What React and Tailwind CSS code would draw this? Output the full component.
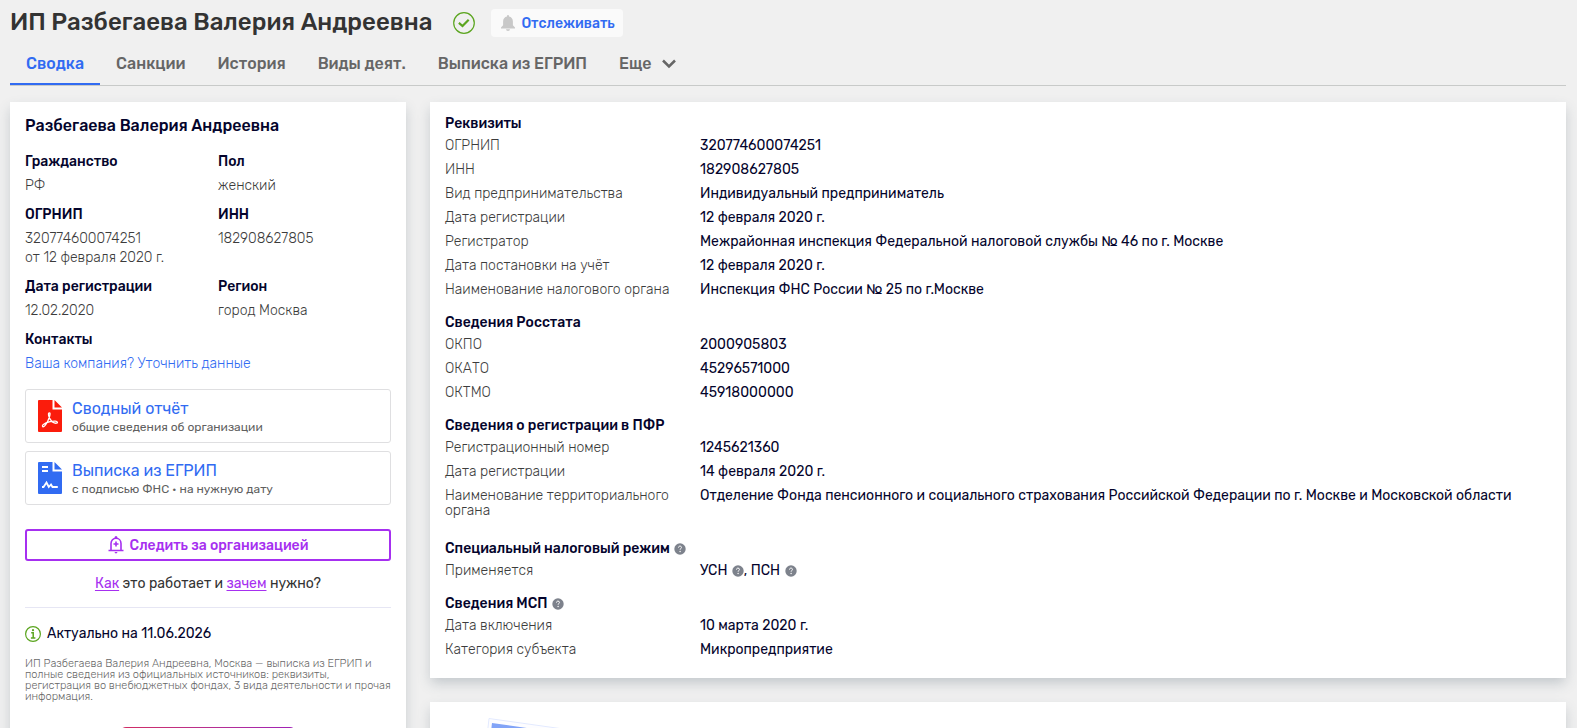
import React from "react";

const tabs = [
  { label: "Сводка", active: true },
  { label: "Санкции" },
  { label: "История" },
  { label: "Виды деят." },
  { label: "Выписка из ЕГРИП" },
];

const profile = [
  { label: "Гражданство", lines: ["РФ"] },
  { label: "Пол", lines: ["женский"] },
  { label: "ОГРНИП", lines: ["320774600074251", "от 12 февраля 2020 г."] },
  { label: "ИНН", lines: ["182908627805"] },
  { label: "Дата регистрации", lines: ["12.02.2020"] },
  { label: "Регион", lines: ["город Москва"] },
];

const HelpIcon = () => (
  <svg viewBox="0 0 12 12" className="ml-px inline-block h-3 w-3 align-[-2px]" aria-hidden="true">
    <circle cx="6" cy="6" r="5.7" fill="#7d828c" />
    <path d="M4.5 4.6c0-1 .7-1.5 1.5-1.5s1.500.5 1.500 1.300c0 1-1.400 1.100-1.400 2.300" fill="none" stroke="#fff" strokeWidth="1" />
    <circle cx="6.100" cy="8.500" r=".7" fill="#fff" />
  </svg>
);

const sections = [
  {
    title: "Реквизиты",
    rows: [
      ["ОГРНИП", "320774600074251"],
      ["ИНН", "182908627805"],
      ["Вид предпринимательства", "Индивидуальный предприниматель"],
      ["Дата регистрации", "12 февраля 2020 г."],
      ["Регистратор", "Межрайонная инспекция Федеральной налоговой службы № 46 по г. Москве"],
      ["Дата постановки на учёт", "12 февраля 2020 г."],
      ["Наименование налогового органа", "Инспекция ФНС России № 25 по г.Москве"],
    ],
  },
  {
    title: "Сведения Росстата",
    rows: [
      ["ОКПО", "2000905803"],
      ["ОКАТО", "45296571000"],
      ["ОКТМО", "45918000000"],
    ],
  },
  {
    title: "Сведения о регистрации в ПФР",
    rows: [
      ["Регистрационный номер", "1245621360"],
      ["Дата регистрации", "14 февраля 2020 г."],
      [
        "Наименование территориального органа",
        "Отделение Фонда пенсионного и социального страхования Российской Федерации по г. Москве и Московской области",
      ],
    ],
    extraSpace: true,
  },
  {
    title: "Специальный налоговый режим",
    help: true,
    rows: [
      [
        "Применяется",
        <>
          УСН <HelpIcon />, ПСН <HelpIcon />
        </>,
      ],
    ],
  },
  {
    title: "Сведения МСП",
    help: true,
    rows: [
      ["Дата включения", "10 марта 2020 г."],
      ["Категория субъекта", "Микропредприятие"],
    ],
  },
];

const CheckBadge = () => (
  <svg viewBox="0 0 22 22" className="h-[22px] w-[22px]" role="img" aria-label="Действует">
    <circle cx="11" cy="11" r="10.3" fill="none" stroke="#5ba51f" strokeWidth="1.2" />
    <path d="M5.900 10.900l3.600 3.100 6.200-6.200" fill="none" stroke="#5ba51f" strokeWidth="2.200" />
  </svg>
);

const BellIcon = () => (
  <svg viewBox="0 0 14 16" className="h-4 w-3.5" fill="#c8c8c8" aria-hidden="true">
    <path d="M7 0a1 1 0 0 0-1 1v.6C3.600 2 2.100 4 2.100 6.400v3.800L0 12.600v.8h14v-.8l-2.100-2.400V6.400C11.900 4 10.400 2 8 1.600V1a1 1 0 0 0-1-1zM5 14.300a2 1.700 0 0 0 4 0z" />
  </svg>
);

const ChevronIcon = () => (
  <svg viewBox="0 0 14 10" className="h-2.5 w-3.5" fill="none" stroke="currentColor" strokeWidth="2.500" aria-hidden="true">
    <path d="M1 1.500l6 6 6-6" />
  </svg>
);

const BellPlusIcon = () => (
  <svg viewBox="0 0 16 18" className="h-[18px] w-4" fill="none" stroke="#a62ff0" strokeWidth="1.600" aria-hidden="true">
    <path d="M3 14V7.500C3 4.500 5.200 2.300 8 2.300s5 2.200 5 5.200V14M.5 14.500h15M8 5.500v5M5.500 8h5" />
    <path d="M7 .2h2l.6 2H6.400zM6.300 16h3.400L8 17.700z" fill="#a62ff0" stroke="none" />
  </svg>
);

const PdfIcon = () => (
  <svg viewBox="0 0 24 32" className="h-8 w-6 shrink-0" aria-hidden="true">
    <path d="M1 0h13.500v9.500H24V31a1 1 0 0 1-1 1H1a1 1 0 0 1-1-1V1a1 1 0 0 1 1-1zM16.500 0L24 7.500h-7.500z" fill="#fb1c0c" />
    <path
      d="M11.400 12.800c-1.700 0-.7 4 .6 6.100 1.500 2.500 4.300 4.500 6.300 4.300 1.800-.2 1.400-2-1-2.100-2.700-.1-6.600.5-9.300 1.700-3 1.400-4.200 3.100-3.200 3.800 1.200.8 3.400-2.400 4.900-5.400 1.600-3.300 3.300-8.400 1.700-8.400z"
      fill="none"
      stroke="#fff"
      strokeWidth="1.300"
    />
  </svg>
);

const StatementIcon = () => (
  <svg viewBox="0 0 24 32" className="h-8 w-6 shrink-0" aria-hidden="true">
    <path d="M1 0h13.500v9.500H24V31a1 1 0 0 1-1 1H1a1 1 0 0 1-1-1V1a1 1 0 0 1 1-1zM16.500 0L24 7.500h-7.500z" fill="#316bf2" />
    <path d="M4 5h6M4 9h6" stroke="#fff" strokeWidth="1.800" />
    <path d="M4 25h1.500l3-4.500 2.300 4.500 2.200-2.500 1.500 2.500h5.300" fill="none" stroke="#fff" strokeWidth="1.800" />
  </svg>
);

const InfoIcon = () => (
  <svg viewBox="0 0 16 16" className="h-4 w-4" fill="none" stroke="#5ba51f" aria-hidden="true">
    <circle cx="8" cy="8" r="7.400" strokeWidth="1.200" />
    <path d="M6.200 6.700h2v5.200M5.900 11.900h4.500" strokeWidth="1.500" />
    <circle cx="8" cy="4.200" r="1.100" fill="#5ba51f" stroke="none" />
  </svg>
);

const DocumentLink = ({ icon, title, note }) => (
  <a href="#" className="flex h-[54px] items-center gap-2.5 rounded-[3px] border border-[#dfdfe1] px-3">
    {icon}
    <span className="pt-0.5">
      <span className="block text-base leading-5 text-[#316bf2]">{title}</span>
      <span className="block text-xs leading-4 text-[#606060]">{note}</span>
    </span>
  </a>
);

const Section = ({ title, help, rows, extraSpace }) => (
  <section className={extraSpace ? "pb-[5px]" : ""}>
    <h2 className="mb-0.5 leading-4 font-medium">
      {title} {help && <HelpIcon />}
    </h2>
    <dl>
      {rows.map(([label, value]) => (
        <div key={label} className="flex pt-1 pb-[5px] leading-[15px]">
          <dt className="w-[255px] shrink-0 pr-6 font-light text-[#3c3c3c]">{label}</dt>
          <dd>{value}</dd>
        </div>
      ))}
    </dl>
  </section>
);

const Sidebar = () => (
  <aside className="w-[396px] shrink-0 bg-white px-[15px] pt-3.5 shadow-[0_6px_12px_-1px_rgba(60,80,95,0.25)]">
    <h2 className="text-base leading-5 font-medium">Разбегаева Валерия Андреевна</h2>

    <dl className="mt-4 grid grid-cols-[193px_1fr] gap-y-2.5">
      {profile.map(({ label, lines }) => (
        <div key={label}>
          <dt className="mb-1 leading-5 font-medium">{label}</dt>
          <dd className="leading-[19px] font-light text-[#3c3c3c]">
            {lines.map((line) => (
              <p key={line}>{line}</p>
            ))}
          </dd>
        </div>
      ))}
    </dl>

    <h3 className="mt-2.5 mb-1 leading-5 font-medium">Контакты</h3>
    <a href="#" className="block leading-[19px] font-light text-[#316bf2]">
      Ваша компания? Уточнить данные
    </a>

    <div className="mt-4 space-y-2">
      <DocumentLink icon={<PdfIcon />} title="Сводный отчёт" note="общие сведения об организации" />
      <DocumentLink icon={<StatementIcon />} title="Выписка из ЕГРИП" note="с подписью ФНС • на нужную дату" />
    </div>

    <button className="mt-6 flex h-8 w-full items-center justify-center gap-1.5 rounded-[3px] border-2 border-[#a62ff0] font-medium text-[#a62ff0]">
      <BellPlusIcon />
      <span className="pt-0.5">Следить за организацией</span>
    </button>
    <p className="mt-[13px] border-b border-[#e6e6f4] pb-[13px] text-center leading-5 text-[#333]">
      <a href="#" className="text-[#a62ff0] underline underline-offset-2">Как</a> это работает и{" "}
      <a href="#" className="text-[#a62ff0] underline underline-offset-2">зачем</a> нужно?
    </p>

    <p className="mt-4 flex items-center gap-1.5 leading-5">
      <InfoIcon />
      Актуально на 11.06.2026
    </p>
    <p className="mt-3.5 text-[11px] leading-[11px] font-light text-[#686868]">
      ИП Разбегаева Валерия Андреевна, Москва — выписка из ЕГРИП и полные сведения из официальных источников:
      реквизиты, регистрация во внебюджетных фондах, 3 вида деятельности и прочая информация.
    </p>
    <div className="mx-auto mt-[25px] h-9 w-[176px] rounded-md bg-gradient-to-r from-[#d22b62] to-[#a01fb8] shadow-md" />
  </aside>
);

const App = () => (
  <div className="h-screen overflow-hidden bg-[#f0f0f0] pr-[11px] pl-2.5 font-[Rubik,Roboto,sans-serif] text-sm text-[#04042c]">
    {/* Title */}
    <header className="flex items-center pt-2">
      <h1 className="pb-0.5 text-2xl leading-7 font-medium text-[#333]">ИП Разбегаева Валерия Андреевна</h1>
      <span className="ml-[21px]">
        <CheckBadge />
      </span>
      <button className="ml-4 flex h-7 items-center gap-1.5 rounded bg-[#fafafa] px-2 pl-2.5 font-medium text-[#316bf2]">
        <BellIcon />
        <span className="pt-0.5">Отслеживать</span>
      </button>
    </header>

    {/* Tabs */}
    <nav className="mt-1 flex border-b border-[#c8cac9] text-base font-medium text-[#666]">
      {tabs.map(({ label, active }) => (
        <a
          key={label}
          href="#"
          className={
            active
              ? "border-b-2 border-[#316bf2] px-4 pt-3 pb-[9px] leading-5 text-[#316bf2]"
              : "border-b-2 border-transparent px-4 pt-3 pb-[9px] leading-5"
          }
        >
          {label}
        </a>
      ))}
      <button className="flex items-center gap-2.5 px-4">
        Еще <ChevronIcon />
      </button>
    </nav>

    {/* Content */}
    <div className="mt-4 flex gap-6">
      <Sidebar />
      <main className="min-w-0 flex-1 space-y-6">
        <div className="space-y-[13px] bg-white px-[15px] pt-3.5 pb-4 shadow-[0_6px_12px_-1px_rgba(60,80,95,0.25)]">
          {sections.map((section) => (
            <Section key={section.title} {...section} />
          ))}
        </div>
        <div className="bg-white px-[57px] pt-4 shadow-[0_6px_12px_-1px_rgba(60,80,95,0.25)]">
          <svg viewBox="0 0 180 110" className="h-[110px] w-[180px]" aria-hidden="true">
            <path d="M2 .5l170 24-12 86H-10z" fill="#fdfdff" stroke="#e3eaff" />
            <path d="M5 5l160 23-12 83H-7z" fill="#82a4f7" />
          </svg>
        </div>
      </main>
    </div>
  </div>
);

export default App;
